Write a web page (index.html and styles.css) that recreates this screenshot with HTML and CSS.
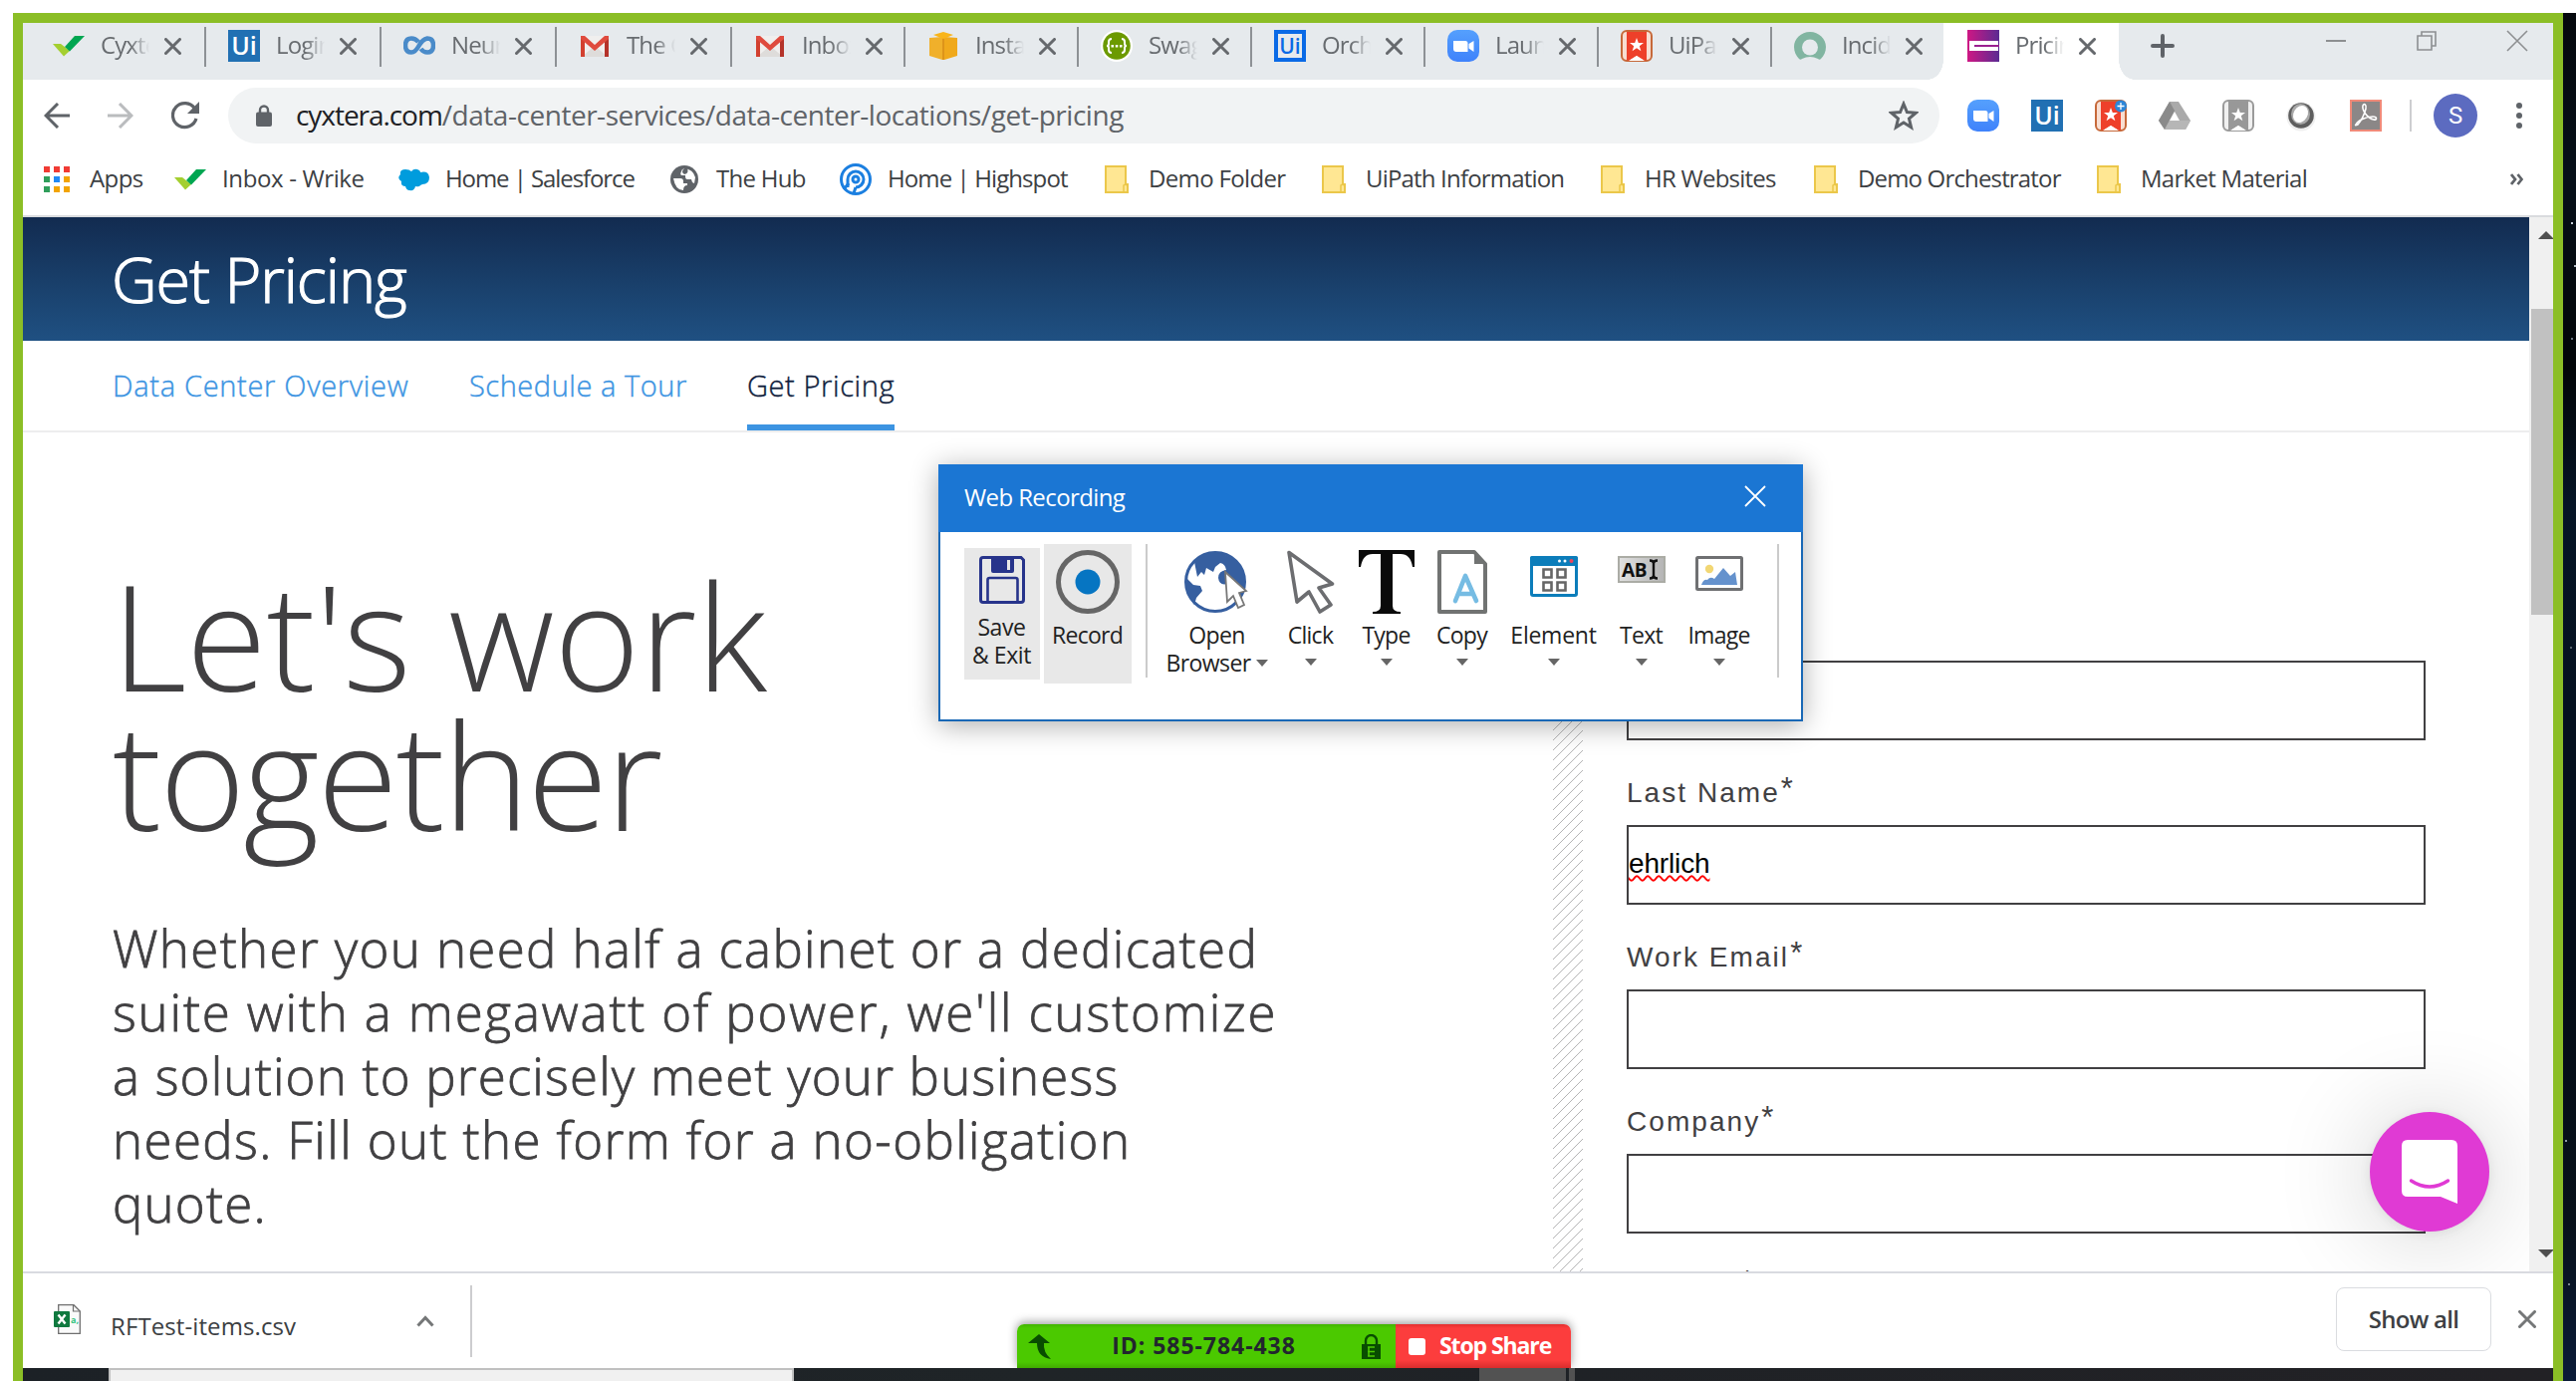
FILE: index.html
```html
<!DOCTYPE html>
<html lang="en">
<head>
<meta charset="utf-8">
<title>Get Pricing</title>
<link rel="stylesheet" href="styles.css">
</head>
<body>
<svg width="0" height="0" class="defs">
  <defs>
    <linearGradient id="zoomFill" x1="0" y1="0" x2="0" y2="1"><stop offset="0" stop-color="#55a0fd"/><stop offset="1" stop-color="#3f82fb"/></linearGradient>
    <linearGradient id="cyxFill"><stop offset="0" stop-color="#cf1784"/><stop offset="1" stop-color="#5a2b92"/></linearGradient>
    <linearGradient id="greyBox"><stop offset="0" stop-color="#e2e2e2"/><stop offset="1" stop-color="#b4b4b4"/></linearGradient>
  </defs>
  <symbol id="close" viewBox="0 0 17 17"><path d="M1.5 1.5l14 14M15.5 1.5l-14 14" stroke="#66696d" stroke-width="3" stroke-linecap="round"/></symbol>
  <symbol id="check" viewBox="0 0 32 32"><path d="M0 14h8l9 7-6 5.500z" fill="#a4cf30"/><path d="M22 6h10L17 21.500l-5-4.500z" fill="#00a651"/></symbol>
  <symbol id="gmail" viewBox="0 0 32 32"><path d="M3 6h26v21H3z" fill="#f0efee"/><path d="M3 27l13-11 13 11z" fill="#dedcda"/><path d="M2 6h4v21H2zM26 6h4v21h-4z" fill="#d2402f"/><path d="M26 12l4-3v18h-4z" fill="#b4332a"/><path d="M2 6h4l10 9 10-9h4v3L16 21 2 9z" fill="#df4b3e"/></symbol>
  <symbol id="zoom" viewBox="0 0 32 32"><rect width="32" height="32" rx="10" fill="url(#zoomFill)"/><path d="M6 11h12q2.500 0 2.500 2.500V22H9q-3 0-3-3zM21.500 14l5-3v11l-5-3.500z" fill="#fff"/></symbol>
  <symbol id="bookmark" viewBox="0 0 32 32"><rect x="1" y="1" width="30" height="30" rx="5" fill="#f8ded2" stroke="#c6693a" stroke-width="2"/><path d="M6 2h20v28l-2 1-8-5-8 5-2-1z" fill="#ee402a"/><path d="M8 31l8-5 8 5z" fill="#fff"/><path d="M16 8l1.800 5h5.200l-4.200 3.200 1.600 5.100-4.400-3.100-4.400 3.100 1.600-5.100L9 13h5.200z" fill="#fff"/></symbol>
  <symbol id="bookmarkGrey" viewBox="0 0 32 32"><rect x="1" y="1" width="30" height="30" rx="5" fill="#f0f0f0" stroke="#9a9a9a" stroke-width="2"/><path d="M6 2h20v28l-2 1-8-5-8 5-2-1z" fill="#989898"/><path d="M8 31l8-5 8 5z" fill="#fff"/><path d="M16 8l1.800 5h5.200l-4.200 3.200 1.600 5.100-4.400-3.100-4.400 3.100 1.600-5.100L9 13h5.200z" fill="#fff"/></symbol>
  <symbol id="folder" viewBox="0 0 24 28"><path d="M1 1h20v18h2v8H1z" fill="#ffe793" stroke="#ebc74a" stroke-width="2"/><path d="M19 26v-6q1.500-1.500 3 0" fill="none" stroke="#ebc74a" stroke-width="1.500"/></symbol>
  <symbol id="caret" viewBox="0 0 12 7"><path d="M0 0h12L6 7z" fill="#666"/></symbol>
</svg>

<div class="shared">
<div class="frame">

  <div class="tabstrip">
    <div class="tab"><svg class="fav"><use href="#check"/></svg><span>Cyxte</span><svg class="x"><use href="#close"/></svg></div>
    <div class="tab sep"><b class="fav ui">Ui</b><span>Login</span><svg class="x"><use href="#close"/></svg></div>
    <div class="tab sep"><svg class="fav" viewBox="0 0 32 32" fill="none" stroke="#4a8bc9" stroke-width="4.500"><path d="M15 12q-3-3.500-7-3.500-6 0-6 7t6 7q4 0 7.500-6.500T24 8.500q6 0 6 7t-6 7q-4 0-6.500-3.500"/></svg><span>Neuro</span><svg class="x"><use href="#close"/></svg></div>
    <div class="tab sep"><svg class="fav"><use href="#gmail"/></svg><span>The C</span><svg class="x"><use href="#close"/></svg></div>
    <div class="tab sep narrow"><svg class="fav"><use href="#gmail"/></svg><span>Inbox</span><svg class="x"><use href="#close"/></svg></div>
    <div class="tab sep narrow"><svg class="fav" viewBox="0 0 32 32"><path d="M2 8l13-1v23L2 26z" fill="#f0b02b"/><path d="M17 7l13 1v18l-13 4z" fill="#f0a91c"/><path d="M15 8h2v22h-2z" fill="#dd941a"/><path d="M6 5l10-3 10 3-10 4z" fill="#f9b51a"/></svg><span>Insta</span><svg class="x"><use href="#close"/></svg></div>
    <div class="tab sep narrow"><svg class="fav" viewBox="0 0 32 32"><circle cx="16" cy="16" r="16" fill="#fff"/><circle cx="16" cy="16" r="13.800" fill="#6c9a00"/><path d="M11 9q-3 0-3 3v2q0 2-2 2 2 0 2 2v2q0 3 3 3M21 9q3 0 3 3v2q0 2 2 2-2 0-2 2v2q0 3-3 3" fill="none" stroke="#fff" stroke-width="2"/><path d="M10.500 15h2.500v2.500h-2.500zM14.800 15h2.500v2.500h-2.500zM19 15h2.500v2.500H19z" fill="#fff"/></svg><span>Swagg</span><svg class="x"><use href="#close"/></svg></div>
    <div class="tab sep narrow"><b class="fav ui outline">Ui</b><span>Orche</span><svg class="x"><use href="#close"/></svg></div>
    <div class="tab sep narrow"><svg class="fav"><use href="#zoom"/></svg><span>Laun</span><svg class="x"><use href="#close"/></svg></div>
    <div class="tab sep narrow"><svg class="fav"><use href="#bookmark"/></svg><span>UiPat</span><svg class="x"><use href="#close"/></svg></div>
    <div class="tab sep last"><svg class="fav" viewBox="0 0 32 32"><path d="M16 2C7 2 0 9 0 17c0 5 2 9 5 12 1 1 2 1 3 0q8-4 16 0c1 1 2 1 3 0 3-3 5-7 5-12C32 9 25 2 16 2z" fill="#81b5a1"/><circle cx="16" cy="17.500" r="8" fill="#e6eaed"/></svg><span>Incide</span><svg class="x"><use href="#close"/></svg></div>
    <div class="tab active"><svg class="fav" viewBox="0 0 32 32"><path d="M0 0h32v32H0z" fill="url(#cyxFill)"/><path d="M2 11h29v10H2z" fill="#fff"/><path d="M7 15h25v2H7z" fill="#9a2090"/></svg><span>Pricin</span><svg class="x"><use href="#close"/></svg></div>
    <svg class="plus" viewBox="0 0 24 24"><path d="M12 2v20M2 12h20" stroke="#5f6368" stroke-width="4" stroke-linecap="round"/></svg>
    <div class="winbtns">
      <svg viewBox="0 0 20 20"><path d="M0 10h20" stroke="#8d8f91" stroke-width="2"/></svg>
      <svg viewBox="0 0 20 20" fill="none" stroke="#8d8f91" stroke-width="1.600"><path d="M1 5h14v14H1zM5 5V1h14v14h-4"/></svg>
      <svg viewBox="0 0 20 20"><path d="M0 0l20 20M20 0L0 20" stroke="#8d8f91" stroke-width="1.600"/></svg>
    </div>
  </div>

  <div class="toolbar">
    <svg class="nav-ic back" viewBox="0 0 26 26" fill="none" stroke="#5f6368" stroke-width="3"><path d="M26 13H2M14 1L2 13l12 12"/></svg>
    <svg class="nav-ic fwd" viewBox="0 0 26 26" fill="none" stroke="#babcbe" stroke-width="3"><path d="M0 13h24M12 1l12 12-12 12"/></svg>
    <svg class="nav-ic reload" viewBox="0 0 28 28"><path d="M23.500 7A12 12 0 1 0 25 17" fill="none" stroke="#5f6368" stroke-width="3.200"/><path d="M28 0v12H16z" fill="#5f6368"/></svg>
    <div class="omnibox">
      <svg class="lock" viewBox="0 0 16 22"><path d="M4 9V5.500a4 4 0 0 1 8 0V9" fill="none" stroke="#5f6368" stroke-width="2.400"/><rect y="7.500" width="16" height="14.500" rx="2" fill="#5f6368"/></svg>
      <span class="url"><em>cyxtera.com</em>/data-center-services/data-center-locations/get-pricing</span>
      <svg class="star" viewBox="0 0 28 28"><path d="M14 3l3.200 7.800 8.300.6-6.400 5.400 2 8.200-7.100-4.500L6.900 25l2-8.200-6.400-5.400 8.300-.6z" fill="none" stroke="#5f6368" stroke-width="2.800"/></svg>
    </div>
    <div class="exts">
      <svg class="fav"><use href="#zoom"/></svg>
      <b class="fav ui">Ui</b>
      <svg class="fav" viewBox="0 0 32 32"><use href="#bookmark"/><circle cx="26" cy="6.500" r="6" fill="#2c86d8"/><path d="M26 3v7M22.500 6.500h7" stroke="#fff" stroke-width="1.300"/></svg>
      <svg class="fav" viewBox="0 0 32 32"><path d="M11 2h9l12 19-5 9H6l-6-9z" fill="#aaa"/><path d="M11 2l5 9-10 19-6-9z" fill="#8a8a8a"/><path d="M6 30l5-9h21l-5 9z" fill="#b6b6b6"/><path d="M16 12l5 9H11z" fill="#fff"/></svg>
      <svg class="fav"><use href="#bookmarkGrey"/></svg>
      <svg class="fav" viewBox="0 0 32 32"><circle cx="15" cy="17" r="14.500" fill="#efefef"/><circle cx="15" cy="16" r="12.800" fill="#5e5e5e"/><ellipse cx="14.500" cy="14.500" rx="9.500" ry="10.500" fill="#a9a9a9"/><ellipse cx="14.500" cy="14.500" rx="7" ry="9" fill="#fff" transform="rotate(30 14.500 14.500)"/></svg>
      <svg class="fav" viewBox="0 0 32 32"><path d="M1 1h30v30H1z" fill="#8b8787" stroke="#f08a79" stroke-width="2"/><path d="M6 25c2-4 10-8 17-8 5 0 4 4 1 3-6-1-12-9-11-14 1-3 4-1 3 3-1 5-5 13-8 16-2 1-3 1-2 0z" fill="none" stroke="#fff" stroke-width="1.600"/></svg>
    </div>
    <i class="rule"></i>
    <span class="avatar">S</span>
    <svg class="dots" viewBox="0 0 6 26" fill="#5f6368"><circle cx="3" cy="3" r="3"/><circle cx="3" cy="13" r="3"/><circle cx="3" cy="23" r="3"/></svg>
  </div>

  <div class="bookmarks">
    <div class="bm"><svg width="26" height="26" viewBox="0 0 26 26"><path d="M0 0h6v6H0zM10 0h6v6h-6zM20 0h6v6h-6z" fill="#f13b34"/><path d="M0 10h6v6H0zM0 20h6v6H0z" fill="#2f9e5b"/><path d="M10 10h6v6h-6z" fill="#2189f5"/><path d="M20 10h6v6h-6zM10 20h6v6h-6zM20 20h6v6h-6z" fill="#f2a400"/></svg><span>Apps</span></div>
    <div class="bm"><svg width="32" height="32"><use href="#check"/></svg><span>Inbox - Wrike</span></div>
    <div class="bm"><svg width="31" height="23" viewBox="0 0 31 23"><path d="M2 6Q1 1 7 1q4 0 6 2 3-4 8-1 1 1 1 2 8-2 9 5 0 7-7 7l-2 1q-1 2-5 1-1 5-6 4-3 0-4-4-5 0-4-5-5-3-1-7z" fill="#009cdd"/></svg><span>Home | Salesforce</span></div>
    <div class="bm"><svg width="28" height="28" viewBox="0 0 28 28"><circle cx="14" cy="14" r="14" fill="#5f6368"/><path d="M3 13h7q3 0 3 3v2h4v2q-4 0-4 5-8 0-10-12z" fill="#fff"/><path d="M11 6q0-2 3-3 9 1 11 9l-1 6-2-1-1-3h-4q-2 0-2-3v-1h-3q-3 0-1-4z" fill="#fff"/><path d="M17 3q2 5-3 6l-2-2q0-3 2-4zM18 17h4v5l-4 2z" fill="#5f6368"/></svg><span>The Hub</span></div>
    <div class="bm"><svg width="32" height="32" viewBox="0 0 32 32" fill="none" stroke="#1b7fe0" stroke-width="3"><circle cx="16" cy="16" r="14.500"/><path d="M8 24V16a8 8 0 1 1 8 8" /><circle cx="16" cy="16" r="3"/><path d="M4 26l5-6M16 24l-2 6"/></svg><span>Home | Highspot</span></div>
    <div class="bm"><svg width="24" height="28"><use href="#folder"/></svg><span>Demo Folder</span></div>
    <div class="bm"><svg width="24" height="28"><use href="#folder"/></svg><span>UiPath Information</span></div>
    <div class="bm"><svg width="24" height="28"><use href="#folder"/></svg><span>HR Websites</span></div>
    <div class="bm"><svg width="24" height="28"><use href="#folder"/></svg><span>Demo Orchestrator</span></div>
    <div class="bm"><svg width="24" height="28"><use href="#folder"/></svg><span>Market Material</span></div>
    <svg class="more" width="13" height="12" viewBox="0 0 13 12" fill="none" stroke="#5f6368" stroke-width="2.800"><path d="M1 1l4 5-4 5M7.500 1l4 5-4 5"/></svg>
  </div>

  <div class="viewport">
    <div class="page">
      <header class="banner">Get Pricing</header>
      <nav class="subnav">
        <a class="n1">Data Center Overview</a><a class="n2">Schedule a Tour</a><a class="n3 current">Get Pricing</a>
      </nav>
      <main class="content">
        <section class="pitch">
          <h1><span>Let's work</span><span class="tight">together</span></h1>
          <p><span>Whether you need half a cabinet or a dedicated</span><span class="w2">suite with a megawatt of power, we'll customize</span><span class="w3">a solution to precisely meet your business</span><span class="w4">needs. Fill out the form for a no-obligation</span><span class="w5">quote.</span></p>
        </section>
        <div class="hatch"></div>
        <form class="form">
          <div class="input"></div>
          <label>Last Name<sup>*</sup></label><div class="input"><span>ehrlich</span></div>
          <label>Work Email<sup>*</sup></label><div class="input"></div>
          <label>Company<sup>*</sup></label><div class="input"></div>
          <label class="cut"><sup>*</sup></label>
        </form>
      </main>
      <div class="chat"><svg viewBox="0 0 56 64"><path d="M6 0h44q6 0 6 6v58l-17-7H6q-6 0-6-6V6q0-6 6-6z" fill="#fff"/><path d="M9.500 41q18.500 12 37 0" fill="none" stroke="#e03ad4" stroke-width="3.400" stroke-linecap="round"/></svg></div>
    </div>
    <div class="scrollbar"><i class="up"></i><i class="thumb"></i><i class="down"></i></div>
  </div>

  <div class="shelf">
    <svg class="file" viewBox="0 0 27 30"><path d="M4.700.7H20L26.300 7v22.300H4.700z" fill="#fafafa" stroke="#6f6f6f" stroke-width="1.300"/><path d="M19.500.7V7h6.800" fill="none" stroke="#6f6f6f" stroke-width="1.200"/><rect y="7" width="16" height="16" rx="1" fill="#10793f"/><path d="M4.500 10.500l7 9M11.500 10.500l-7 9" stroke="#fff" stroke-width="2.400"/><text x="17" y="18.500" font-size="9" font-weight="700" fill="#33c481">a,</text></svg>
    <span class="fname">RFTest-items.csv</span>
    <svg class="chev" viewBox="0 0 18 12"><path d="M1.500 10.500L9 2.500l7.500 8" fill="none" stroke="#757778" stroke-width="3"/></svg>
    <i class="rule"></i>
    <button class="showall">Show all</button>
    <svg class="x2" viewBox="0 0 18 18"><path d="M1.500 1.500l15 15M16.500 1.500l-15 15" stroke="#757778" stroke-width="3" stroke-linecap="round"/></svg>
  </div>
  <div class="taskbar"><i class="search"></i><i class="app"></i><i class="app2"></i></div>
</div>
<div class="space"></div>
</div>

<div class="dialog">
  <div class="titlebar"><span>Web Recording</span><svg viewBox="0 0 22 22"><path d="M1 1l20 20M21 1L1 21" stroke="#fff" stroke-width="1.800"/></svg></div>
  <div class="tools">
    <div class="tool save"><svg width="46" height="48" viewBox="0 0 46 48"><path d="M4 1.500h38l2.500 2.500v40q0 2.500-2.500 2.500H4Q1.500 46.500 1.500 44V4Q1.500 1.500 4 1.500z" fill="none" stroke="#27348b" stroke-width="3"/><path d="M12 1h23v14q0 2-2 2H14q-2 0-2-2z" fill="#27348b"/><path d="M28 4h3v10h-3z" fill="#e8e8e8"/><path d="M8.500 46V24q0-2 2-2h26q2 0 2 2v22" fill="none" stroke="#27348b" stroke-width="2.600"/></svg><span>Save<br>&amp; Exit</span></div>
    <div class="tool record"><svg width="64" height="64" viewBox="0 0 64 64"><circle cx="32" cy="32" r="29.500" fill="none" stroke="#666" stroke-width="5"/><circle cx="32" cy="32" r="12.500" fill="#0675c2"/></svg><span>Record</span></div>
    <i class="vline"></i>
    <div class="tool open"><svg width="66" height="64" viewBox="0 0 66 64"><circle cx="31" cy="32" r="29.500" fill="#fff" stroke="#365fa0" stroke-width="3"/><path d="M10 12Q24-2 41 5q20 8 20 28-3 13-8 20l-4-8-3 5q-5-2-3-16-8 2-9-6 0-7 8-8-1-6-6-7l-5 4-2 5-7-4-2 7-3-3-4 5zM2 28l7 7 7 1 2 5-6 7-2 7Q1 44 2 28z" fill="#365fa0"/><path d="M41 22l21 19-7 2 5 12-6 3-5-12-6 6z" fill="#fff" stroke="#777" stroke-width="1.800"/></svg><span>Open<br>Browser<svg class="caret"><use href="#caret"/></svg></span></div>
    <div class="tool click"><svg width="48" height="64" viewBox="0 0 48 64"><path d="M2 2.500L45.500 34 32 38l12 17-11 7-11-20-12 10z" fill="#fff" stroke="#6c6d70" stroke-width="3.600" stroke-linejoin="round"/></svg><span>Click</span><svg class="caret"><use href="#caret"/></svg></div>
    <div class="tool type"><svg width="56" height="64" viewBox="0 0 56 64"><path d="M0 0h56v17h-2Q52 4 42 4H34v52q0 6 8 6v2H14v-2q8 0 8-6V4h-8Q4 4 2 17H0z" fill="#0a0a0a"/></svg><span>Type</span><svg class="caret"><use href="#caret"/></svg></div>
    <div class="tool copy"><svg width="50" height="64" viewBox="0 0 50 64"><path d="M2 2h35l11 12v48H2z" fill="#fff" stroke="#717372" stroke-width="4" stroke-linejoin="round"/><path d="M37 1v13h12z" fill="#717372"/><path d="M18 51l10-25 11 25M21.500 44h14" fill="none" stroke="#76bce3" stroke-width="4.600" stroke-linecap="round" stroke-linejoin="round"/></svg><span>Copy</span><svg class="caret"><use href="#caret"/></svg></div>
    <div class="tool element"><svg width="48" height="64" viewBox="0 0 48 64"><rect x="1.500" y="7.500" width="45" height="38" rx="1.500" fill="#fff" stroke="#0c7dba" stroke-width="3"/><path d="M0 8q0-2 2-2h44q2 0 2 2v8H0z" fill="#0c7dba"/><circle cx="29.500" cy="11" r="1.500" fill="#fff"/><circle cx="35" cy="11" r="1.500" fill="#fff"/><circle cx="41.500" cy="11" r="2" fill="#f0435a"/><path d="M13.500 19.500h8v8h-8zM27.500 19.500h8v8h-8zM13.500 32.500h8v8h-8zM27.500 32.500h8v8h-8z" fill="none" stroke="#666" stroke-width="2.600"/></svg><span>Element</span><svg class="caret"><use href="#caret"/></svg></div>
    <div class="tool text"><svg width="48" height="64" viewBox="0 0 48 64"><rect x="1" y="7" width="46" height="25" fill="url(#greyBox)" stroke="#abaca5" stroke-width="2"/><text x="4" y="26.500" font-size="19" font-weight="700" letter-spacing="-.3" fill="#111">AB</text><path d="M32 10.500q4 0 4 3v12q0 3-4 3M40 10.500q-4 0-4 3v12q0 3 4 3" fill="none" stroke="#111" stroke-width="2.400"/></svg><span>Text</span><svg class="caret"><use href="#caret"/></svg></div>
    <div class="tool image"><svg width="48" height="64" viewBox="0 0 48 64"><rect x="1.500" y="7.500" width="45" height="32" rx="1" fill="#fff" stroke="#6f7072" stroke-width="3"/><circle cx="14" cy="19" r="4.200" fill="#f2d774"/><path d="M6 35q2-6 6-5 3-4 7-1l9-11 7 8 5-4 2 13z" fill="#6592cd"/></svg><span>Image</span><svg class="caret"><use href="#caret"/></svg></div>
    <i class="vline end"></i>
  </div>
</div>

<div class="share">
  <div class="id"><svg width="24" height="25" viewBox="0 0 24 25"><path d="M11 0l11 9h-6q-1 9 7 16-14-2-14-16H0z" fill="#084d00"/></svg><span>ID: 585-784-438</span><svg width="19" height="25" viewBox="0 0 19 25"><path d="M4 11V6.500a5.500 5.500 0 0 1 11 0V11" fill="none" stroke="#084d00" stroke-width="2.400"/><path d="M0 10h19v15H0z" fill="#084d00"/><path d="M6 13h7M6 17.500h7M6 22h7M7 13v9" stroke="#4bc900" stroke-width="1.600"/></svg></div>
  <div class="stop"><i></i><span>Stop Share</span></div>
</div>
</body>
</html>
```
FILE: styles.css
```css
* { box-sizing: border-box; }
body { margin: 0; width: 2586px; height: 1386px; overflow: hidden; position: relative; background: #fff; font-family: "Open Sans", "Noto Sans", sans-serif; color: #3c4043; }
svg { display: block; flex: none; }
.defs { position: absolute; }
i { font-style: normal; }

.shared { display: flex; padding: 13px 0 0 13px; height: 1386px; }
.frame { width: 2560px; border: 10px solid #8bbe26; border-bottom: 0; display: flex; flex-direction: column; }
.space { width: 13px; background:
  radial-gradient(circle at 9px 211px, #c9d2da 0 1px, transparent 1.500px),
  radial-gradient(circle at 12px 254px, #aeb8c0 0 1px, transparent 1.500px),
  radial-gradient(circle at 9px 327px, #6a7480 0 1px, transparent 1.500px),
  radial-gradient(circle at 8px 637px, #55606b 0 1px, transparent 1.500px),
  radial-gradient(circle at 3px 1132px, #8e99a4 0 1px, transparent 1.500px),
  radial-gradient(circle at 6px 1276px, #7a8590 0 1px, transparent 1.500px),
  linear-gradient(#05080d, #071019 12%, #020508 26%, #061526 36%, #051120 50%, #040c17 70%, #08111a 88%, #0b1b38); }

/* tab strip */
.tabstrip { height: 57px; flex: none; display: flex; background: #e6eaed; padding-left: 7px; position: relative; }
.tab { width: 176px; height: 46px; display: flex; align-items: center; padding-left: 23px; font-size: 24px; letter-spacing: -.9px; color: #686c70; background: no-repeat 0 4px / 2px 40px; }
.tab.sep { background-image: linear-gradient(#8d9195, #8d9195); }
.tab.sep:nth-child(n+2) { margin-left: -1px; padding-left: 24px; width: 177px; }
.tab.sep.narrow { width: 175px; }
.tab.sep.last { width: 174px; }
.tab.active { width: 176px; height: 57px; padding: 0 0 11px 24px; background: #fff; position: relative; }
.tab.active::before, .tab.active::after { content: ""; position: absolute; bottom: 0; width: 16px; height: 20px; }
.tab.active::before { left: -16px; background: radial-gradient(ellipse 16px 20px at 0 0, transparent 98%, #fff); }
.tab.active::after { right: -16px; background: radial-gradient(ellipse 16px 20px at 100% 0, transparent 98%, #fff); }
.tab span { width: 49px; margin: 0 15px 3px 16px; overflow: hidden; white-space: nowrap; -webkit-mask: linear-gradient(90deg, #000 60%, transparent); mask: linear-gradient(90deg, #000 60%, transparent); }
.fav { width: 32px; height: 32px; flex: none; }
.ui { background: #2170b3; color: #fff; font-weight: 600; font-size: 25px; line-height: 31px; text-align: center; letter-spacing: 0; }
.ui.outline { background: #e6eaed; color: #0a6ae6; border: 4px solid #0a6ae6; font-size: 21px; line-height: 24px; }
.x { width: 17px; height: 17px; }
.plus { width: 24px; height: 24px; margin: 11px 0 0 32px; }
.winbtns { display: flex; gap: 71px; margin: 8px 26px 0 auto; }
.winbtns svg { width: 20px; height: 20px; overflow: visible; }

/* toolbar */
.toolbar { height: 72px; flex: none; display: flex; align-items: center; padding-left: 21px; }
.nav-ic { width: 26px; height: 26px; }
.fwd { margin-left: 38px; }
.reload { width: 28px; height: 28px; margin-left: 38px; }
.omnibox { width: 1718px; height: 56px; margin-left: 29px; border-radius: 28px; background: #f1f3f4; display: flex; align-items: center; padding: 0 21px 0 28px; }
.lock { width: 16px; height: 22px; }
.url { margin: 0 auto 2px 24px; font-size: 28px; letter-spacing: -.47px; color: #5f6368; white-space: nowrap; }
.url em { font-style: normal; color: #202124; letter-spacing: -1.050px; }
.star { width: 30px; height: 30px; }
.exts { display: flex; gap: 32px; margin-left: 28px; }
.toolbar .rule { width: 2px; height: 32px; background: #cdced0; margin-left: 28px; }
.avatar { width: 44px; height: 44px; border-radius: 50%; margin-left: 22px; background: #5c6bc0; color: #fff; font: 24px/44px Roboto, sans-serif; text-align: center; }
.dots { width: 6px; height: 26px; margin-left: 39px; }

/* bookmarks bar */
.bookmarks { height: 66px; flex: none; display: flex; align-items: flex-start; padding-left: 21px; border-bottom: 2px solid #d9dbde; font-size: 24px; letter-spacing: -.9px; }
.bm { height: 56px; display: flex; align-items: center; white-space: nowrap; flex: none; }
.bm span { margin: 0 0 3px 20px; }
.bm:nth-child(1) { width: 131px; letter-spacing: -.6px; }
.bm:nth-child(2) { width: 225px; letter-spacing: -.36px; }
.bm:nth-child(2) span { margin-left: 16px; }
.bm:nth-child(3) { width: 273px; letter-spacing: -1.080px; }
.bm:nth-child(3) span { margin-left: 16px; }
.bm:nth-child(4) { width: 170px; letter-spacing: -.7px; }
.bm:nth-child(4) span { margin-left: 18px; }
.bm:nth-child(5) { width: 266px; }
.bm:nth-child(5) span { margin-left: 16px; }
.bm:nth-child(6) { width: 218px; letter-spacing: -.65px; }
.bm:nth-child(7) { width: 280px; letter-spacing: -.82px; }
.bm:nth-child(8) { width: 214px; letter-spacing: -.75px; }
.bm:nth-child(9) { width: 284px; letter-spacing: -.84px; }
.bm:nth-child(10) { letter-spacing: -.72px; }
.more { margin: 22px 30px 0 auto; }

/* web page */
.viewport { height: 1058px; flex: none; display: flex; }
.page { width: 2516px; height: 1058px; overflow: hidden; position: relative; }
.banner { height: 124px; padding-left: 89px; background: linear-gradient(#122b50, #1a426e 60%, #1f5082); color: #fff; font-size: 63px; line-height: 124px; font-weight: 300; letter-spacing: -1.050px; -webkit-text-stroke: 1.200px #fff; }
.subnav { height: 92px; border-bottom: 2px solid #ededee; display: flex; padding-left: 90px; font-size: 29px; font-weight: 300; color: #3c94e2; }
.subnav a { height: 90px; line-height: 90px; white-space: nowrap; -webkit-text-stroke: .4px currentColor; }
.n1 { width: 358px; letter-spacing: .7px; }
.n2 { width: 279px; letter-spacing: .55px; }
.n3 { width: 148px; letter-spacing: .6px; }
.current { color: #0f1d3c; border-bottom: 6px solid #3c94e2; }
.content { display: flex; height: 842px; color: #414042; }
.pitch { width: 1536px; padding: 133px 0 0 90px; }
.pitch span { display: block; white-space: nowrap; }
h1 { margin: 0 0 72px -1px; font-size: 147px; line-height: 140px; font-weight: 300; letter-spacing: -.300px; }
h1 .tight { margin-left: 1px; letter-spacing: -2px; }
.pitch p { margin: 0; font-size: 51px; line-height: 64px; font-weight: 300; letter-spacing: 1.360px; -webkit-text-stroke: .8px currentColor; }
.pitch .w2 { letter-spacing: 1.850px; }
.pitch .w3 { letter-spacing: 1.180px; }
.pitch .w4 { letter-spacing: 1.380px; }
.pitch .w5 { letter-spacing: 1.200px; }
.hatch { width: 30px; margin-top: 200px; background: repeating-linear-gradient(135deg, #fff 0 5.770px, #b5b5b6 5.770px 7.071px); }
.form { width: 802px; margin-left: 44px; padding-top: 229px; font-family: "Liberation Sans", Arial, sans-serif; font-size: 28px; }
.input { height: 80px; border: 2px solid #414042; background: #fff; display: flex; align-items: center; color: #000; }
.input span { letter-spacing: -.150px; text-decoration: underline wavy #f00 1.500px; text-underline-offset: 2px; text-decoration-skip-ink: none; margin: 0 0 2px; }
label { display: block; height: 85px; padding-top: 21px; line-height: 64px; letter-spacing: 2.050px; }
sup { font-size: 31px; line-height: 0; vertical-align: 3px; margin-left: 1px; }
.cut { padding-left: 114px; }
.chat { position: absolute; left: 2356px; top: 898px; width: 120px; height: 120px; border-radius: 50%; background: #e03ad4; box-shadow: 0 2px 12px rgba(0,0,0,.08), 0 4px 100px rgba(0,0,0,.2); padding: 28px 32px; }
.chat svg { width: 56px; height: 64px; }
.scrollbar { width: 24px; background: #f0f0f0; display: flex; flex-direction: column; align-items: flex-end; overflow: hidden; }
.scrollbar .up, .scrollbar .down { width: 15px; height: 8px; background: #4f4f4f; }
.up { margin-top: 14px; clip-path: polygon(8px 0, 15px 7px, 15px 8px, 0 8px); }
.thumb { width: 22px; height: 307px; margin-top: 70px; background: #c1c1c1; }
.down { margin: auto 0 14px; clip-path: polygon(0 0, 15px 0, 15px 1px, 8px 8px); }

/* download shelf */
.shelf { height: 97px; flex: none; border-top: 2px solid #d9dae0; display: flex; align-items: flex-start; padding-left: 31px; }
.file { width: 27px; height: 30px; margin-top: 31px; }
.fname { width: 185px; margin: 36px 0 0 30px; font-size: 24px; line-height: 33px; letter-spacing: .1px; white-space: nowrap; }
.chev { width: 18px; height: 12px; margin: 42px 0 0 122px; }
.shelf .rule { width: 2px; height: 72px; margin: 12px 0 0 36px; background: #cdcdcf; }
.showall { width: 156px; height: 64px; margin: 14px 0 0 auto; padding: 0 0 2px; border: 1.500px solid #dadce0; border-radius: 8px; background: #fff; color: #3c4043; font: 600 24px "Open Sans", sans-serif; letter-spacing: -.7px; }
.x2 { width: 18px; height: 18px; margin: 37px 17px 0 27px; }
.taskbar { height: 13px; flex: none; display: flex; background: linear-gradient(90deg, #1c2126, #1f2427 40%, #1f2226 60%, #222125); }
.search { width: 688px; margin-left: 86px; background: #f0f0f0; border: 2px solid #c0c0c0; border-bottom: 0; }
.app { width: 87px; margin-left: 688px; background: #525252; }
.app2 { width: 6px; margin-left: 3px; background: #525252; }

/* recorder dialog */
.dialog { position: absolute; left: 942px; top: 466px; width: 868px; height: 258px; background: #fff; border: 2px solid #1968b6; border-top: 0; box-shadow: 0 4px 26px rgba(0,0,0,.32); color: #222; }
.titlebar { height: 68px; margin: 0 -2px; padding: 0 37px 0 26px; background: #1b76d3; color: #fff; display: flex; align-items: center; justify-content: space-between; font-size: 24px; letter-spacing: -.6px; }
.titlebar span { margin-bottom: 3px; }
.titlebar svg { width: 22px; height: 22px; margin-bottom: 4px; }
.tools { display: flex; align-items: flex-start; padding: 12px 0 0 24px; font-size: 23px; line-height: 28px; letter-spacing: -.75px; text-align: center; }
.tool { display: flex; flex-direction: column; align-items: center; padding-top: 6px; white-space: nowrap; }
.tool > span { margin-top: 7px; margin-left: -1px; }
.caret { width: 12px; height: 7px; margin-top: 10px; }
.save { width: 76px; height: 132px; margin: 4px 4px 0 0; padding-top: 8px; background: #e8e8e8; letter-spacing: -.4px; }
.save > span { margin-top: 9px; }
.record { width: 88px; height: 140px; margin-right: 14px; background: #e8e8e8; }
.vline { width: 2px; height: 134px; background: #cbcbcb; }
.open { width: 104px; margin-left: 19px; }
.open > svg { margin-right: 3px; }
.open .caret { display: inline-block; margin: 0 0 5px 5px; }
.tool.open > span { margin-left: -3px; letter-spacing: -.6px; }
.click { width: 60px; margin-left: 11px; }
.type { width: 60px; margin-left: 16px; }
.copy { width: 60px; margin-left: 16px; }
.element { width: 90px; margin-left: 17px; letter-spacing: -.25px; }
.text { width: 50px; margin-left: 18px; }
.image { width: 70px; margin-left: 18px; }
.vline.end { margin-left: 23px; }

/* screen share bar */
.share { position: absolute; left: 1021px; top: 1329px; width: 556px; height: 44px; display: flex; border-radius: 7px 7px 0 0; font-weight: 700; font-size: 23px; box-shadow: 0 -2px 10px rgba(0,0,0,.4); clip-path: inset(-16px -16px 0 -16px); }
.id { width: 380px; display: flex; align-items: center; justify-content: space-between; padding: 0 15px 0 11px; background: linear-gradient(#43b300, #4bc900 4px, #4bc900 38px, #41ab00); color: #22262e; border-radius: 7px 0 0 0; }
.id span { margin: 0 6px 3px 0; letter-spacing: .95px; }
.stop { flex: 1; display: flex; align-items: center; padding-left: 13px; background: linear-gradient(#e33030, #fc3d3d 4px, #fc3d3d 36px, #d82d2d); color: #fff; border-radius: 0 7px 0 0; }
.stop i { width: 17px; height: 17px; border-radius: 3px; background: #fff; }
.stop span { margin: 0 0 3px 14px; letter-spacing: -1.100px; white-space: nowrap; }
```
